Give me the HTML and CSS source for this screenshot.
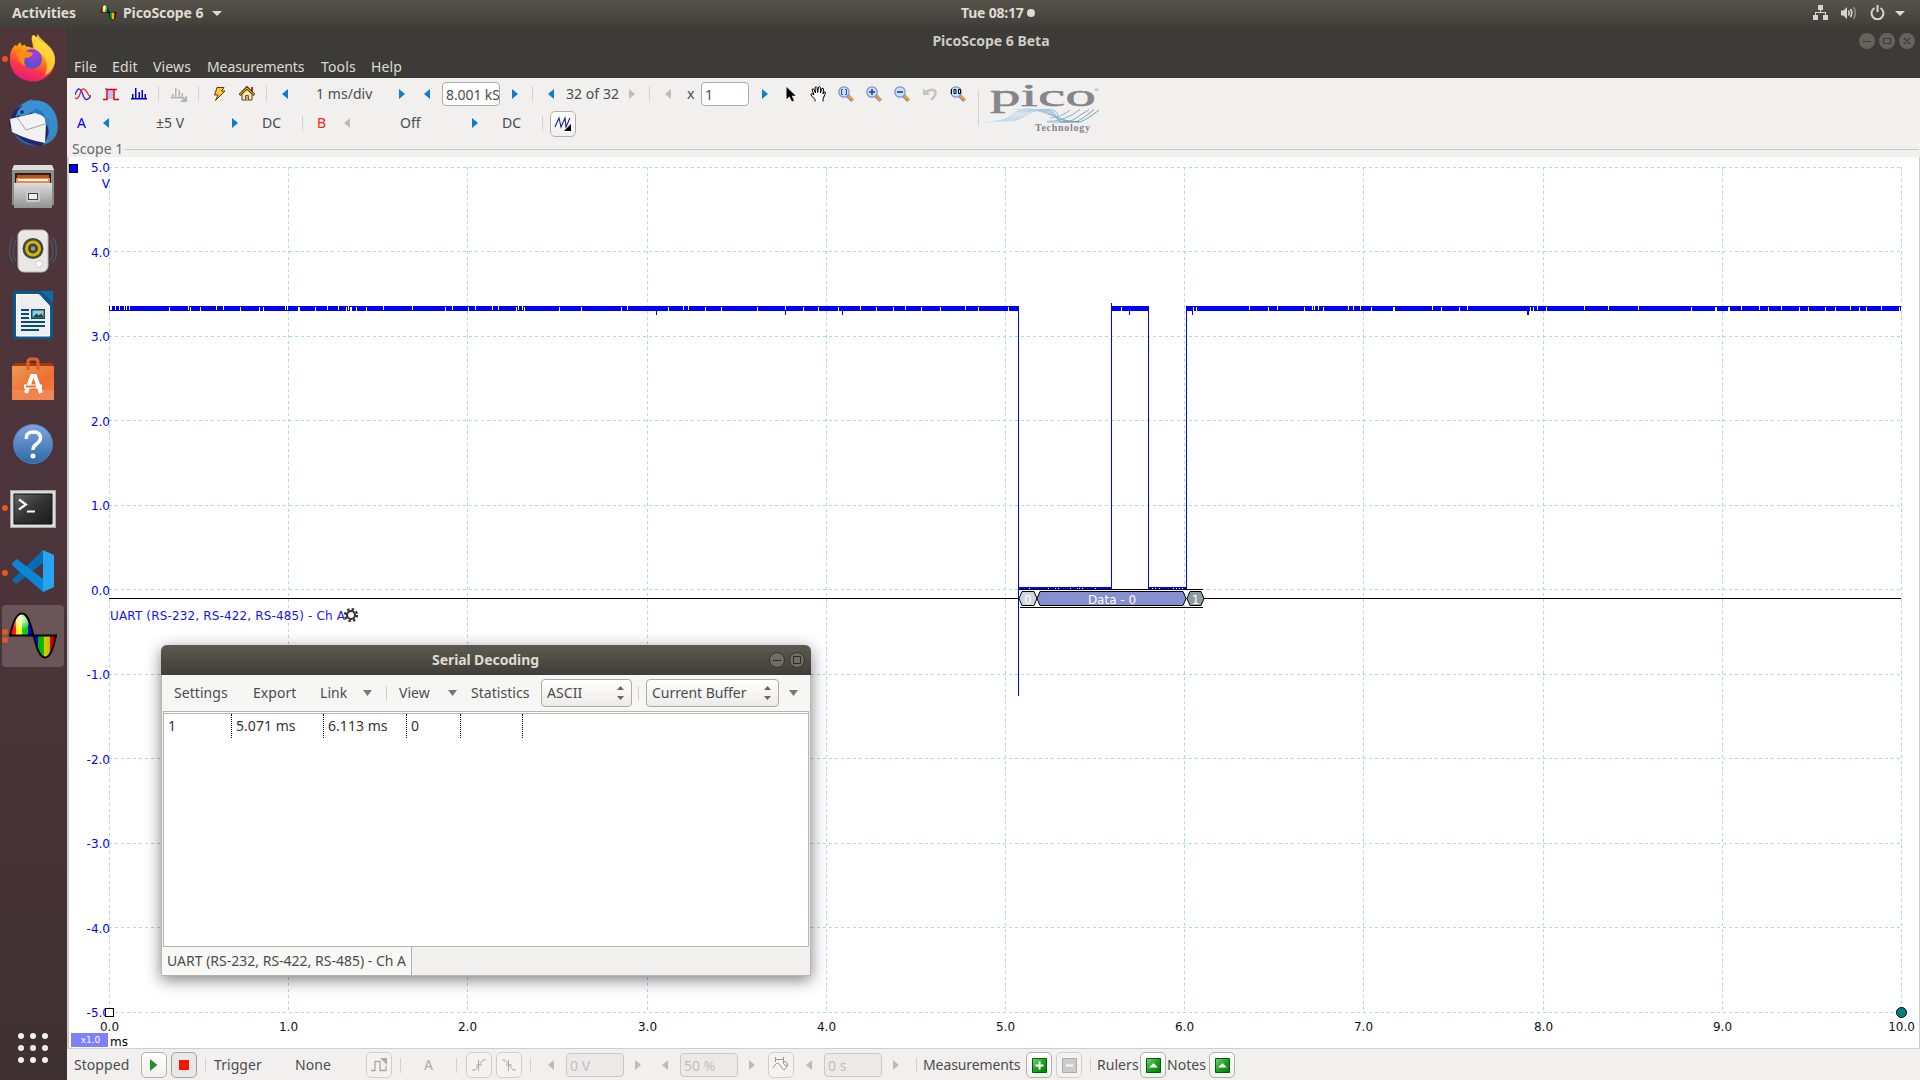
FILE: index.html
```html
<!DOCTYPE html>
<html lang="en">
<head>
<meta charset="utf-8">
<title>PicoScope 6 Beta</title>
<link rel="stylesheet" href="styles.css">
</head>
<body>
<svg class="defs" width="0" height="0">
  <defs>
    <linearGradient id="ff" x1=".7" y1="0" x2=".3" y2="1"><stop offset="0" stop-color="#fff44f"/><stop offset=".4" stop-color="#ff980e"/><stop offset=".72" stop-color="#ff3647"/><stop offset="1" stop-color="#e31587"/></linearGradient>
    <radialGradient id="ffc" cx=".6" cy=".3"><stop offset="0" stop-color="#b833e1"/><stop offset="1" stop-color="#5b50d6"/></radialGradient>
    <linearGradient id="tb" x1="0" y1="0" x2="1" y2="1"><stop offset="0" stop-color="#3fa4e0"/><stop offset=".5" stop-color="#1f6fc4"/><stop offset="1" stop-color="#1b4a9a"/></linearGradient>
    <linearGradient id="silver" x1="0" y1="0" x2="0" y2="1"><stop offset="0" stop-color="#dcdcdc"/><stop offset="1" stop-color="#939393"/></linearGradient>
    <linearGradient id="bag" x1="0" y1="0" x2="1" y2="1"><stop offset="0" stop-color="#e89a55"/><stop offset=".6" stop-color="#ee6f31"/><stop offset="1" stop-color="#f2824d"/></linearGradient>
    <linearGradient id="help" x1="0" y1="0" x2="0" y2="1"><stop offset="0" stop-color="#7fa5e0"/><stop offset="1" stop-color="#2d6aa6"/></linearGradient>
    <linearGradient id="term" x1="0" y1="0" x2="1" y2="1"><stop offset="0" stop-color="#666"/><stop offset=".5" stop-color="#333"/><stop offset="1" stop-color="#1b1b1b"/></linearGradient>
    <linearGradient id="rb"><stop offset="0" stop-color="#e00"/><stop offset=".25" stop-color="#f22"/><stop offset=".25" stop-color="#fe0"/><stop offset=".5" stop-color="#ff4"/><stop offset=".5" stop-color="#1d1"/><stop offset=".78" stop-color="#0c0"/><stop offset=".78" stop-color="#00d"/><stop offset="1" stop-color="#00e"/></linearGradient>
    <linearGradient id="rb2"><stop offset="0" stop-color="#00d"/><stop offset=".2" stop-color="#00d"/><stop offset=".2" stop-color="#0a0"/><stop offset=".48" stop-color="#1b1"/><stop offset=".48" stop-color="#dc0"/><stop offset=".74" stop-color="#bb0"/><stop offset=".74" stop-color="#d00"/><stop offset="1" stop-color="#a00"/></linearGradient>
    <radialGradient id="shine" cx=".5" cy=".25" r=".5"><stop offset="0" stop-color="#fff" stop-opacity=".95"/><stop offset="1" stop-color="#fff" stop-opacity="0"/></radialGradient>
    <linearGradient id="green" x1="0" y1="0" x2="1" y2="1"><stop offset="0" stop-color="#7fd67a"/><stop offset=".5" stop-color="#1fa01f"/><stop offset="1" stop-color="#008000"/></linearGradient>
    <linearGradient id="wave"><stop offset="0" stop-color="#cfe4f5"/><stop offset=".45" stop-color="#a3c9e4"/><stop offset="1" stop-color="#5e8ba5"/></linearGradient>
    <symbol id="pico" viewBox="0 0 50 50">
      <path d="M2 24.500C5 10 9 2.500 14 2.500S22 10 25.500 24.500z" fill="url(#rb)"/><path d="M2 24.500C5 10 9 2.500 14 2.500S22 10 25.500 24.500z" fill="url(#shine)" stroke="#000" stroke-width="1.800"/>
      <path d="M25.500 24.500C29 39 32 46.500 37 46.500S45 39 48 24.500z" fill="url(#rb2)" stroke="#000" stroke-width="1.800"/>
    </symbol>
    <symbol id="al" viewBox="0 0 6 10"><path d="M6 0v10L0 5z" fill="currentColor"/></symbol>
    <symbol id="ar" viewBox="0 0 6 10"><path d="M0 0v10L6 5z" fill="currentColor"/></symbol>
    <symbol id="ad" viewBox="0 0 9 6"><path d="M0 0h9L4.500 6z" fill="currentColor"/></symbol>
    <symbol id="mag" viewBox="0 0 16 16">
      <path d="M9.500 9.500l5 5" stroke="#6d7896" stroke-width="3.600"/><path d="M10 9.500l5 5" stroke="#f09a45" stroke-width="2.600"/>
      <circle cx="6" cy="6" r="5.200" fill="#c4e4fb" stroke="#7f95cf" stroke-width="1.300"/>
    </symbol>
    <symbol id="spin" viewBox="0 0 7 14"><path d="M0 4h7L3.500 0zM0 10h7L3.500 14z" fill="#666"/></symbol>
  </defs>
</svg>

<header class="topbar">
  <span class="activities">Activities</span>
  <svg class="app-icon" width="17" height="17"><use href="#pico"/></svg>
  <span class="app-name">PicoScope 6</span>
  <svg class="app-arrow" width="10" height="5" viewBox="0 0 10 5"><path d="M0 0h10L5 5z" fill="#dfdbd2"/></svg>
  <span class="clock">Tue 08:17<i></i></span>
  <span class="tray">
    <svg width="15" height="16" viewBox="0 0 15 16" fill="#d6d5d2"><path d="M5 0h5v5H5zM0 10h5v5H0zM10 10h5v5h-5zM7 5h1v2h5v3h-1V8H3v2H2V7h5z"/></svg>
    <svg width="16" height="14" viewBox="0 0 16 14" fill="none" stroke="#d6d5d2"><path d="M0 4.500h2.500L6 1v12L2.500 9.500H0z" fill="#d6d5d2" stroke="none"/><path d="M7.500 4.500q1.500 2.500 0 5M9.500 3q2.500 4 0 8" stroke-width="1.600"/><path d="M12.500 1q3.500 6 0 12" stroke="#85837e" stroke-width="1.800"/></svg>
    <svg width="15" height="16" viewBox="0 0 15 16" fill="none" stroke="#d6d5d2" stroke-width="2"><path d="M4.500 3a6 6 0 1 0 6 0M7.500 0v7"/></svg>
    <svg width="10" height="5" viewBox="0 0 10 5"><path d="M0 0h10L5 5z" fill="#dfdbd2"/></svg>
  </span>
</header>

<div class="desktop">
<nav class="dock">
  <div class="tile run"><svg width="48" height="48" viewBox="0 0 48 48"><path d="M24 1l1 0c2 3 6 5 9 8q2-1 4 3c6 5 8 9 8 16A22.500 21.500 0 1 1 1 24c0-6 2-10 5-13l2 1 3-4 2 4q4-3 3 0l8 2c0-6-3-9 0-13z" fill="url(#ff)"/><path d="M29 0c2 7 17 12 17 25 0 8-5 14-10 16 4-8 2-19-7-23-6-5-4-12 0-18z" fill="#ffd83a" opacity=".85"/><circle cx="23" cy="25" r="10" fill="url(#ffc)"/><path d="M7 20q8-5 17-1-1 5-8 5-2 5 1 8-7-2-8-10z" fill="#ff8a16"/></svg></div>
  <div class="tile low"><svg width="50" height="50" viewBox="0 0 50 50"><circle cx="26" cy="25" r="22.500" fill="url(#tb)"/><path d="M1 26Q3 12 14 7l10 8 17 5 1 20-10 8Q8 44 1 26z" fill="#23266e"/><path d="M2 21l25-6q11 2 11 10l-1 20Q20 42 4 34z" fill="#f2f2f4"/><path d="M8 18l10 14 19-6" fill="none" stroke="#888" stroke-width=".8"/><path d="M8 18Q14 3 25 1q-6 4-5 8 18 0 17 16 8 8-2 22 20-6 13-30Q40 0 24 3 10 7 8 18z" fill="#3c9ad6" opacity=".8"/><path d="M8 18Q12 6 24 2q6 2 2 10-4 4-11 6-5-1-7 0z" fill="#3c8fd0"/><circle cx="14" cy="14" r="1.800" fill="#083157"/></svg></div>
  <div class="tile low"><svg width="44" height="46" viewBox="0 0 44 46"><path d="M3 1h38l2 5v35H1V6z" fill="#8d8d8d"/><path d="M3 1h38l2 5H1z" fill="#ddd"/><path d="M4 9h36v14H4z" fill="#222"/><path d="M6 11h32v3H6z" fill="#c2501c"/><path d="M5 14h34v8H5z" fill="#f0883e"/><path d="M7 15h30v2H7z" fill="#fff"/><path d="M3 19h38v25H3z" fill="url(#silver)"/><rect x="15" y="27" width="14" height="11" rx="2" fill="#ccc"/><rect x="17.500" y="29.500" width="9" height="6" fill="#eee" stroke="#444"/></svg></div>
  <div class="tile"><svg width="50" height="44" viewBox="0 0 50 44"><path d="M5 8q-7 14 0 26M45 8q7 14 0 26M8 11q-6 11 0 21M42 11q6 11 0 21" fill="none" stroke="#4c5368" stroke-width="1.400"/><rect x="10" y="1" width="30" height="42" rx="6" fill="#e8e7e4" stroke="#bbb"/><circle cx="25" cy="19.500" r="10.500" fill="#444"/><circle cx="25" cy="19.500" r="8" fill="#d6b400"/><circle cx="25" cy="19.500" r="5" fill="#444"/><circle cx="25" cy="19.500" r="2.200" fill="#999"/><circle cx="31" cy="35" r="3.500" fill="#fff" stroke="#ccc"/></svg></div>
  <div class="tile"><svg width="40" height="48" viewBox="0 0 40 48"><path d="M2 0h26l12 14v32q0 2-2 2H2q-2 0-2-2V2q0-2 2-2z" fill="#0b5a8e"/><path d="M3.500 3.500H26L36.500 15v30h-33z" fill="#eee" stroke="#fff"/><path d="M28 0h12v12z" fill="#0b6aa8"/><path d="M8 19h8M8 23h8M8 27h8M8 31h24M8 35h24M8 39h18" stroke="#0b4a72" stroke-width="2"/><path d="M18 18h14v10H18z" fill="#0b4a72"/><path d="M19.500 19.500h11v7h-11z" fill="#8ecbee"/><path d="M19.500 26.500l4-4 2 2 3-2 2 4z" fill="#1e4b34"/><circle cx="29" cy="21" r="1.600" fill="#e8b936"/></svg></div>
  <div class="tile"><svg width="42" height="44" viewBox="0 0 42 44"><path d="M1 7l4-1h33l3 1v4H1z" fill="#a83a10"/><path d="M0 9h42v34H0z" fill="url(#bag)"/><path d="M0 33h42v10H0z" fill="#f58c58" opacity=".7"/><path d="M16 13V5q0-3 3-3h4q3 0 3 3v8" fill="none" stroke="#e65e22" stroke-width="3"/><path d="M14 36l6-17h3l6 17M12 29.500h18" fill="none" stroke="#fff" stroke-width="4"/><path d="M14 29.500h10" stroke="#ee6f31" stroke-width="2"/></svg></div>
  <div class="tile low"><svg width="42" height="42" viewBox="0 0 42 42"><circle cx="21" cy="21" r="19.500" fill="url(#help)" stroke="#4d82be"/><path d="M14.500 16q-1-7 7-7 7 0 7 6 0 3-4 6-3.500 2.500-3.500 6" fill="none" stroke="#fff" stroke-width="3.400"/><circle cx="21" cy="33" r="2.500" fill="#fff"/></svg></div>
  <div class="tile run lower"><svg width="46" height="38" viewBox="0 0 46 38"><path d="M0 0h46v38H0z" fill="#a9a9a9"/><path d="M1 1h44v36H1z" fill="#dcdcdc"/><path d="M4 4h38v30H4z" fill="url(#term)" stroke="#111"/><path d="M9 9.500l7 5-7 5" fill="none" stroke="#fff" stroke-width="2.200"/><path d="M17 21.500h8" stroke="#fff" stroke-width="2"/></svg></div>
  <div class="tile run high"><svg width="42" height="42" viewBox="0 0 42 42"><path d="M0 30l4 4L31 13V0z" fill="#0a6cb0"/><path d="M0 13l5-4 26 20v13L2 17q-2-2-2-4z" fill="#0b86d2"/><path d="M31 0l11 5v32l-11 5z" fill="#26a4f2"/></svg></div>
  <div class="tile run2 active"><svg width="50" height="50"><use href="#pico"/></svg></div>
  <svg class="apps" width="32" height="32" viewBox="0 0 32 32" fill="#f2f1ef"><circle cx="4" cy="4" r="3"/><circle cx="16" cy="4" r="3"/><circle cx="28" cy="4" r="3"/><circle cx="4" cy="16" r="3"/><circle cx="16" cy="16" r="3"/><circle cx="28" cy="16" r="3"/><circle cx="4" cy="28" r="3"/><circle cx="16" cy="28" r="3"/><circle cx="28" cy="28" r="3"/></svg>
</nav>

<main class="app">
  <div class="titlebar"><span></span><b>PicoScope 6 Beta</b>
    <span class="winbtns">
      <svg width="56" height="16" viewBox="0 0 56 16"><g fill="#65635d"><circle cx="8" cy="8" r="8"/><circle cx="28" cy="8" r="8"/><circle cx="48" cy="8" r="8"/></g><path d="M4 8.500h8M24.500 5.500h7v5h-7zM45 5l6 6M51 5l-6 6" fill="none" stroke="#3c3b37" stroke-width="1.200"/></svg>
    </span>
  </div>
  <div class="menubar"><span>File</span><span>Edit</span><span>Views</span><span class="wide">Measurements</span><span>Tools</span><span>Help</span></div>

  <div class="toolbars">
    <div class="rows">
      <div class="row row1">
        <svg width="16" height="16" viewBox="0 0 16 16" fill="none" stroke-width="1.300"><path d="M0 9q2-6 4-6t4 6 5 4 3-4" stroke="#22f"/><path d="M0 12q3 2 5-4t4-5 4 5 3 2" stroke="#e22"/></svg>
        <svg width="16" height="16" viewBox="0 0 16 16" fill="none"><path d="M5 4h6v9H5z" fill="#b8c0f8"/><path d="M0 13.500h4V3.500h10M11 3v10.500h5" stroke="#e00" stroke-width="1.500"/><path d="M2 3h2" stroke="#22f"/></svg>
        <svg width="16" height="16" viewBox="0 0 16 16"><path d="M0 12h16v1.500H0zM1 8h1.500v4H1zM4 2h1.500v10H4zM7.500 6H9v6H7.500zM10.500 4H12v8h-1.500zM13.500 8H15v4h-1.500z" fill="#00c"/></svg>
        <i class="sep"></i>
        <svg width="16" height="16" viewBox="0 0 16 16"><path d="M0 11h13v1.500H0zM1 8h1.500v4H1zM4 2h1.500v10H4zM7.500 4H9v8H7.500zM10.500 7H12v5h-1.500zM16 9v7H9z" fill="#b5b5b5"/></svg>
        <i class="sep"></i>
        <svg width="16" height="16" viewBox="0 0 16 16"><path d="M5 1.500h7L9.500 5H13L3.500 14.500 6 9H2.500z" fill="#ffc33c" stroke="#5c3d00"/></svg>
        <svg width="16" height="16" viewBox="0 0 16 16"><path d="M12 1h2v5h-2z" fill="#b22"/><path d="M3 8v6h10V8L8 3.500z" fill="#ffe9a5" stroke="#444"/><path d="M.5 9L8 1.500 15.500 9" fill="none" stroke="#5a3a00" stroke-width="2.600"/><path d="M1 8.500L8 2l7 6.500" fill="none" stroke="#ffc33c" stroke-width="1"/><path d="M6.500 14V9.500h3V14" fill="#ca6" stroke="#654"/></svg>
        <i class="sep"></i>
        <svg class="arr" width="6" height="10"><use href="#al"/></svg><span>1 ms/div</span><svg class="arr" width="6" height="10"><use href="#ar"/></svg>
        <svg class="arr" width="6" height="10"><use href="#al"/></svg><span class="input rate">8.001 kS</span><svg class="arr" width="6" height="10"><use href="#ar"/></svg>
        <i class="sep"></i>
        <svg class="arr" width="6" height="10"><use href="#al"/></svg><span>32 of 32</span><svg class="arr off" width="6" height="10"><use href="#ar"/></svg>
        <i class="sep"></i>
        <svg class="arr off" width="6" height="10"><use href="#al"/></svg><span>x</span><span class="input zoomval">1</span><svg class="arr" width="6" height="10"><use href="#ar"/></svg>
        <svg width="16" height="16" viewBox="0 0 16 16"><path d="M3.500 1v12l3-2.500L9 15.500l2-1-2.300-4.700h4z"/></svg>
        <svg width="16" height="16" viewBox="0 0 16 16"><path d="M5 15.500v-2L.8 9q0-2 2-1L4 9 2 3.500Q3 2 4 3.500L5.500 7 5 1.500q1.500-1.500 2 0l.7 5L8.500 1q1.500-1 2 .5V7l1.300-4.500q1.500-1 1.700.5L13 8l1-2q1.500-.5 1.500 1L13 13v2.500" fill="#fff" stroke="#000"/></svg>
        <svg width="16" height="16" viewBox="0 0 16 16"><use href="#mag"/><path d="M5 3.500H3.500v5H5M7 3.500h1.500v5H7" fill="none" stroke="#44449a"/></svg>
        <svg width="16" height="16" viewBox="0 0 16 16"><use href="#mag"/><path d="M3 6h6M6 3v6" stroke="#33339a" stroke-width="1.600"/></svg>
        <svg width="16" height="16" viewBox="0 0 16 16"><use href="#mag"/><path d="M3 6h6" stroke="#33339a" stroke-width="1.600"/></svg>
        <svg width="16" height="16" viewBox="0 0 16 16"><path d="M4 6q9-5 9.500 1 0 3-4.500 7" fill="none" stroke="#c4c4c4" stroke-width="2.600"/><path d="M1 2v7h7z" fill="#c4c4c4"/></svg>
        <svg width="16" height="16" viewBox="0 0 16 16"><use href="#mag"/><path d="M1.500 3v5M4 3.500h2v4H4zM8.500 3.500h2v4h-2z" fill="none" stroke="#000"/></svg>
      </div>
      <div class="row row2">
        <span class="cha">A</span><svg class="arr" width="6" height="10"><use href="#al"/></svg><span>±5 V</span><svg class="arr" width="6" height="10"><use href="#ar"/></svg><span>DC</span>
        <i class="sep"></i>
        <span class="chb">B</span><svg class="arr off" width="6" height="10"><use href="#al"/></svg><span>Off</span><svg class="arr" width="6" height="10"><use href="#ar"/></svg><span>DC</span>
        <i class="sep"></i>
        <span class="btn"><svg width="18" height="16" viewBox="0 0 18 16"><path d="M1 11L5 2l2 9 4-9 1 9 4-9" fill="none" stroke="#1a1a9c" stroke-width="1.100"/><path d="M17 8v7h-7z"/></svg></span>
      </div>
    </div>
    <i class="sep tall"></i>
    <svg class="logo" width="116" height="52" viewBox="0 0 116 52">
      <g font-family="Liberation Serif, serif" fill="#85858a">
        <text x="5" y="22" font-size="32" textLength="106" lengthAdjust="spacingAndGlyphs" stroke="#85858a" stroke-width=".5">pico</text>
        <text x="50" y="47" font-size="10" textLength="55" font-weight="bold">Technology</text>
        <text x="109" y="8" font-size="6">®</text>
      </g>
      <g fill="none" stroke="url(#wave)" stroke-width=".9"><path d="M0 38q20 0 27-7t17-6 24 7 26 6h1q8-3 19-12M6 37.500q18-1 24-7t18-5 22 7 24 5M12 37.500q15-1 21-7t18-5 20 7 21 5q8-4 17-12M17 37.500q14-2 19-7t18-5 16 7 20 5M22 37.500q12-2 17-7t18-5 14 7 14 5q7-4 19-12M27 37.500q10-3 15-7t18-5 13 7 10 5M62 37.500q18 0 33-12M65 34q10 0 20-8"/><path d="M28 25.500h34M62 38h32"/></g>
    </svg>
  </div>

  <section class="scope">
    <div class="legend">Scope 1</div>
    <div class="frame">
      <svg id="plot" class="plot" width="1849" height="891" viewBox="69 157 1849 891">
        <g id="grid" class="grid"></g>
        <g id="ylabels" class="ylabels"></g>
        <g id="xlabels" class="xlabels"></g>
        <rect x="69.500" y="164.500" width="8" height="8" fill="#00f" stroke="#000"/>
        <g class="ylabels"><text x="110" y="188">V</text></g>
        <path class="baseline" d="M109 598.500H1901"/>
        <g id="trace" class="trace">
          <path d="M109 308.500H1019M1112 308.500H1149M1187 308.500H1901" stroke-width="5"/>
          <path d="M1018.500 306V696M1111.500 303V589M1148.500 306V589M1186.500 306V589M1129.500 310V315M1192.500 310V315M656.500 310V315M785.500 310V315M842.500 310V315" stroke-width="1"/>
          <path d="M1528 310V315" stroke-width="2"/>
          <path d="M1018 588.500H1112M1149 588.500H1187" stroke-width="3"/>
        </g>
        <g id="gaps" fill="#fff"></g>
        <path d="M1020 589.500H1203M1020 607.500H1203" stroke="#000"/>
        <g stroke="#000">
          <path d="M1019 598.500l3-7h12l3 7-3 7h-12z" fill="#cdd6d9"/>
          <path d="M1037 598.500l3-7h143l3 7-3 7h-143z" fill="#8490cf"/>
          <path d="M1187 598.500l3-7h11l3 7-3 7h-11z" fill="#8c9ca3"/>
        </g>
        <g class="bits"><text x="1028" y="604">0</text><text x="1112" y="604">Data - 0</text><text x="1195.500" y="604">1</text></g>
        <g class="uart"><text x="110" y="620" textLength="235">UART (RS-232, RS-422, RS-485) - Ch A</text></g>
        <circle cx="351" cy="615" r="4" fill="none" stroke="#333" stroke-width="2.200"/><circle cx="351" cy="615" r="6" fill="none" stroke="#333" stroke-width="2.200" stroke-dasharray="2.400 2.312"/>
        <rect x="105.500" y="1008.500" width="8" height="8" fill="#fff" stroke="#000"/>
        <circle cx="1901.500" cy="1012.500" r="5" fill="#008080" stroke="#000"/>
        <path d="M71 1033h37v14H71z" fill="#8080ff"/>
        <text class="zoomtag" x="90.500" y="1043">x1.0</text>
        <text class="unit" x="110" y="1046">ms</text>
      </svg>

      <div class="serial">
        <div class="serial-title"><b>Serial Decoding</b>
          <svg width="36" height="16" viewBox="0 0 36 16"><g fill="#6f6d67" stroke="#35342f"><circle cx="8" cy="8" r="7.500"/><circle cx="28" cy="8" r="7.500"/></g><path d="M4 8.500h8M24.500 4.500h7v7h-7z" fill="none" stroke="#2c2b27"/></svg>
        </div>
        <div class="serial-tools">
          <span>Settings</span><span>Export</span><span>Link</span><svg width="9" height="6"><use href="#ad"/></svg><i class="sep"></i><span>View</span><svg width="9" height="6"><use href="#ad"/></svg><span>Statistics</span>
          <span class="combo c1">ASCII<svg width="7" height="14"><use href="#spin"/></svg></span><i class="sep"></i><span class="combo c2">Current Buffer<svg width="7" height="14"><use href="#spin"/></svg></span><svg width="9" height="6"><use href="#ad"/></svg>
        </div>
        <div class="table"><div class="trow"><span>1</span><span>5.071 ms</span><span>6.113 ms</span><span>0</span><span></span></div></div>
        <div class="tabs"><span>UART (RS-232, RS-422, RS-485) - Ch A</span></div>
      </div>
    </div>
  </section>

  <footer class="status">
    <span>Stopped</span>
    <span class="btn"><svg width="8" height="12" viewBox="0 0 8 12"><path d="M0 0l7.500 6L0 12z" fill="#2c8a2c"/></svg></span>
    <span class="btn pressed"><svg width="10" height="10"><path d="M0 0h10v10H0z" fill="#f10"/></svg></span>
    <i class="sep"></i><span>Trigger</span><span>None</span>
    <span class="btn dis"><svg width="16" height="16" viewBox="0 0 16 16"><path d="M0 13.500h4V4.500h5v9h6V9" fill="none" stroke="#aaa" stroke-width="1.300"/><path d="M9 1h7v7z" fill="#aaa"/></svg></span>
    <i class="sep"></i><span class="dim">A</span><i class="sep"></i>
    <span class="btn dis pressed"><svg width="16" height="16" viewBox="0 0 16 16"><path d="M1 13h3l8-10h3M5 8h6M7.500 3v11" fill="none" stroke="#aaa"/></svg></span>
    <span class="btn dis"><svg width="16" height="16" viewBox="0 0 16 16"><path d="M1 3h3l8 10h3M5 8h6M7.500 3v11" fill="none" stroke="#aaa"/></svg></span>
    <i class="sep"></i>
    <svg class="arr off" width="6" height="10"><use href="#al"/></svg><span class="input dis">0 V</span><svg class="arr off" width="6" height="10"><use href="#ar"/></svg>
    <svg class="arr off" width="6" height="10"><use href="#al"/></svg><span class="input dis">50 %</span><svg class="arr off" width="6" height="10"><use href="#ar"/></svg>
    <span class="btn dis"><svg width="18" height="16" viewBox="0 0 18 16"><path d="M1 11q4-8 7-3t4 5 4-5M3 2.500h9M3.500 0v5M11.500 0v5M13 4l3 3-2 2-3-3z" fill="none" stroke="#999"/></svg></span>
    <svg class="arr off" width="6" height="10"><use href="#al"/></svg><span class="input dis">0 s</span><svg class="arr off" width="6" height="10"><use href="#ar"/></svg>
    <i class="sep"></i><span class="wide">Measurements</span>
    <span class="btn"><svg width="15" height="15" viewBox="0 0 15 15"><path d="M.5.500h14v14H.5z" fill="url(#green)" stroke="#005a10"/><path d="M3.500 7.500h8M7.500 3.500v8" stroke="#fff" stroke-width="2"/></svg></span>
    <span class="btn dis"><svg width="15" height="15" viewBox="0 0 15 15"><path d="M.5.500h14v14H.5z" fill="#ccc" stroke="#aaa"/><path d="M4 7.500h7" stroke="#fff" stroke-width="2"/></svg></span>
    <i class="sep"></i><span>Rulers</span>
    <span class="btn"><svg width="15" height="15" viewBox="0 0 15 15"><path d="M.5.500h14v14H.5z" fill="url(#green)" stroke="#005a10"/><path d="M3 9.500h9L7.500 5z" fill="#fff"/></svg></span>
    <span>Notes</span>
    <span class="btn"><svg width="15" height="15" viewBox="0 0 15 15"><path d="M.5.500h14v14H.5z" fill="url(#green)" stroke="#005a10"/><path d="M3 9.500h9L7.500 5z" fill="#fff"/></svg></span>
  </footer>
</main>
</div>
<script src="plot.js"></script>
</body>
</html>
```
FILE: styles.css
```css
* { box-sizing: border-box; }
body { margin: 0; width: 1920px; height: 1080px; overflow: hidden; display: flex; flex-direction: column; font: 14px/20px "Noto Sans", "Open Sans", sans-serif; letter-spacing: .05px; color: #4c4c4c; background: #f1f0ee; white-space: nowrap; }
svg { display: block; flex: none; }
.defs { position: absolute; }

/* desktop top bar */
.topbar { flex: none; height: 28px; display: grid; grid-template-columns: 88px 23px 89px 749px 1fr auto; align-items: center; padding: 0 15px 2px 12px; background: linear-gradient(#57534a, #3f3e39); color: #dfdbd2; font-weight: 700; letter-spacing: -.1px; }
.app-icon { margin-top: -1px; }
.clock { display: flex; align-items: center; gap: 3px; letter-spacing: -.2px; }
.clock i { width: 8px; height: 8px; border-radius: 50%; background: #dfdbd2; }
.tray { display: flex; align-items: center; gap: 13px; }
.tray svg:last-child { margin-left: -3px; }

/* launcher */
.desktop { flex: 1; display: flex; min-height: 0; }
.dock { width: 67px; flex: none; display: flex; flex-direction: column; background: linear-gradient(#50363a, #4b343a 50%, #3f3032); padding: 0 3px 16px 2px; }
.tile { position: relative; height: 64.200px; display: flex; align-items: center; justify-content: center; top: -2px; }
.tile.low svg { margin-top: 2px; }
.tile.lower svg { margin-top: 4px; }
.tile.high svg { margin-top: -2px; }
.tile.active { height: 62px; background: #6a5559; border-radius: 4px; top: -1px; }
.run::before, .run2::before, .run2::after { content: ""; position: absolute; left: 0; top: 30px; width: 6px; height: 6px; border-radius: 50%; background: #e95420; }
.run2::before { top: 24px; }
.run2::after { top: 32px; }
.apps { margin: auto 0 0 15px; }

/* main window */
.app { flex: 1; min-width: 0; display: flex; flex-direction: column; }
.titlebar { height: 26px; display: grid; grid-template-columns: 1fr auto 1fr; align-items: center; background: #3c3b37; color: #cfccc4; padding-right: 5px; }
.titlebar b { font-weight: 700; letter-spacing: 0; }
.winbtns { justify-self: end; }
.menubar { height: 24px; display: grid; grid-template-columns: 38px 41px 54px 114px 50px 50px; padding-left: 7px; background: #3c3b37; color: #dfdbd2; line-height: 25px; border-bottom: 1px solid #35342f; letter-spacing: .15px; }
.wide { letter-spacing: -.1px; }
.toolbars { display: flex; height: 64px; }
.rows { width: 911px; }
.row { display: grid; align-items: center; }
.row1 { height: 31px; padding-left: 8px; grid-template-columns: 28px 28px 27px 13px 27px 14px 27px 27px 16px 34px 83px 25px 18px 70px 20px 16px 18px 63px 20px 16px 22px 14px 61px 21px 27px 28px 28px 28px 28px 28px 28px; }
.row2 { height: 29px; padding-left: 10px; grid-template-columns: 26px 53px 76px 30px 40px 15px 27px 56px 72px 30px 40px 8px 26px; }
.row2 > :not(.btn) { margin-top: -1px; }
.sep { width: 1px; height: 15px; background: #d3d1cd; }
.sep.tall { height: 35px; margin-top: 13px; }
.logo { margin: 6px 0 0 6px; overflow: visible; }
.arr { color: #0b7fce; }
.arr.off { color: #bcbcba; }
.cha { color: #00f; }
.chb { color: #f22; }
.input { height: 24px; border: 1px solid #b0aca5; border-radius: 4px; background: #fff; padding: 0 3px; line-height: 24px; overflow: hidden; }
.rate { width: 58px; letter-spacing: -.1px; }
.zoomval { width: 48px; }
.input.dis { width: 58px; background: #ebeae8; border-color: #cbc9c5; color: #c3c0bb; }
.btn { width: 26px; height: 26px; border: 1px solid #b4b1ab; border-radius: 5px; background: linear-gradient(#fff, #f1f0ee); display: flex; align-items: center; justify-content: center; }
.btn.pressed { background: #e9e8e6; border-color: #a5a29c; }
.btn.dis { border-color: #d0cec9; background: #f4f3f1; }
.dim { color: #aaa; }

/* scope view */
.scope { height: 907px; display: flex; flex-direction: column; }
.legend { height: 15px; display: flex; align-items: flex-start; line-height: 13px; padding-left: 5px; color: #6a6a6a; }
.legend::after { content: ""; flex: 1; height: 1px; margin: 7px 1px 0 2px; background: #cbc9c6; }
.frame { height: 892px; border: solid #cfcdc9; border-width: 0 1px 1px 2px; background: #fff; position: relative; }
.plot text { font-family: "DejaVu Sans", sans-serif; font-size: 12px; letter-spacing: 0; }
.grid path { stroke: #add8e6; stroke-dasharray: 3 3; fill: none; }
.ylabels text { fill: #00f; text-anchor: end; }
.xlabels text { fill: #111; text-anchor: middle; }
.uart text { fill: #1414f0; }
.bits text { fill: #fff; text-anchor: middle; }
.baseline { stroke: #000; }
.trace path { stroke: #00f; fill: none; }
.plot .zoomtag { fill: #fff; font-size: 9px; text-anchor: middle; }

/* floating serial decoding window */
.serial { position: absolute; left: 92px; top: 488px; width: 650px; height: 331px; display: flex; flex-direction: column; border-radius: 6px 6px 2px 2px; background: #f1f0ee; box-shadow: 0 4px 16px rgba(0,0,0,.5); border: 1px solid #b9b7b1; border-top: 0; }
.serial-title { height: 30px; flex: none; margin: 0 -1px; padding-right: 6px; border-radius: 6px 6px 0 0; background: linear-gradient(#5d5a50, #3f3e39); color: #dfdbd2; display: grid; grid-template-columns: 1fr auto; align-items: center; text-align: center; }
.serial-title b { font-weight: 700; padding-left: 41px; letter-spacing: -.1px; }
.serial-tools { height: 36px; flex: none; padding-left: 12px; background: #f6f6f5; display: grid; align-items: center; grid-template-columns: 79px 67px 43px 23px 13px 49px 23px 70px 97px 8px 143px 10px; color: #4c4c4c; }
.serial-tools > svg, .combo svg { color: #777; }
.combo { display: flex; align-items: center; justify-content: space-between; height: 28px; border: 1px solid #aeaba5; border-radius: 4px; padding: 0 7px 0 5px; background: linear-gradient(#fff, #ecebe9); }
.c1 { width: 91px; }
.c2 { width: 133px; letter-spacing: -.05px; }
.table { height: 236px; flex: none; margin: 0 1px; border: 1px solid #bab6ae; border-top: 3px double #bab6ae; background: #fff; color: #333; }
.trow { display: grid; grid-template-columns: 68px 92px 83px 54px 62px; line-height: 23px; }
.trow span { height: 24px; padding-left: 4px; border-right: 1px dotted #000; }
.tabs { flex: 1; display: flex; }
.tabs span { padding: 0 5px; width: 250px; border-right: 1px solid #b4b1ab; border-bottom: 1px solid #b4b1ab; background: #f8f8f7; line-height: 28px; letter-spacing: 0; }

/* bottom status toolbar */
.status { flex: 1; display: grid; align-items: center; padding-left: 7px; padding-top: 1px; grid-template-columns: 67px 30px 34px 9px 81px 71px 34px 24px 32px 10px 30px 34px 18px 18px 69px 27px 18px 69px 19px 38px 18px 69px 23px 7px 103px 30px 34px 7px 43px 27px 42px 26px; }
```
FILE: plot.js
```js
const NS = 'http://www.w3.org/2000/svg';
const add = (parent, tag, attrs, text) => {
  const el = document.createElementNS(NS, tag);
  for (const k in attrs) el.setAttribute(k, attrs[k]);
  if (text) el.textContent = text;
  document.getElementById(parent).appendChild(el);
};

// grid and axis labels: 10 ms across, +5 V to -5 V down
for (let i = 0; i <= 10; i++) {
  const x = Math.round(109 + i * 179.2) + 0.5;
  const y = Math.floor(167 + i * 84.5) + 0.5;
  add('grid', 'path', { d: `M${x} 167V1013` });
  add('grid', 'path', { d: `M109 ${y}H1902` });
  add('ylabels', 'text', { x: 110, y: 172 + Math.ceil(i * 84.5) }, (5 - i).toFixed(1));
  add('xlabels', 'text', { x, y: 1031 }, i.toFixed(1));
}

// sampling noise: one-pixel gaps in the upper or lower edge of the trace
const upper = [110, 111, 115, 119, 124, 126, 129, 188, 216, 223, 285, 287, 327, 338, 348, 383, 412, 452, 475, 492, 498, 518, 522, 627, 683, 688, 785, 860, 905, 965, 1249, 1277, 1312, 1314, 1318, 1348, 1353, 1360, 1432, 1467, 1537, 1584, 1608, 1638, 1741, 1759, 1781, 1850, 1881];
const lower = [169, 190, 200, 240, 259, 263, 298, 299, 315, 346, 350, 351, 356, 366, 445, 468, 516, 524, 559, 581, 621, 668, 705, 721, 757, 803, 818, 838, 876, 893, 921, 940, 978, 1008, 1121, 1193, 1196, 1268, 1304, 1323, 1371, 1393, 1394, 1441, 1459, 1530, 1533, 1546, 1691, 1715, 1716, 1728, 1729, 1768, 1799, 1808, 1825, 1835, 1859, 1866, 1899];
upper.forEach(x => add('gaps', 'rect', { x, y: 306, width: 1, height: 4 }));
lower.forEach(x => add('gaps', 'rect', { x, y: 307, width: 1, height: 4 }));
[1029, 1048, 1055, 1058, 1070, 1077, 1079, 1082, 1095, 1152, 1155, 1159, 1173, 1176, 1179, 1182].forEach(x => add('gaps', 'rect', { x, y: 588, width: 1, height: 1 }));
```
